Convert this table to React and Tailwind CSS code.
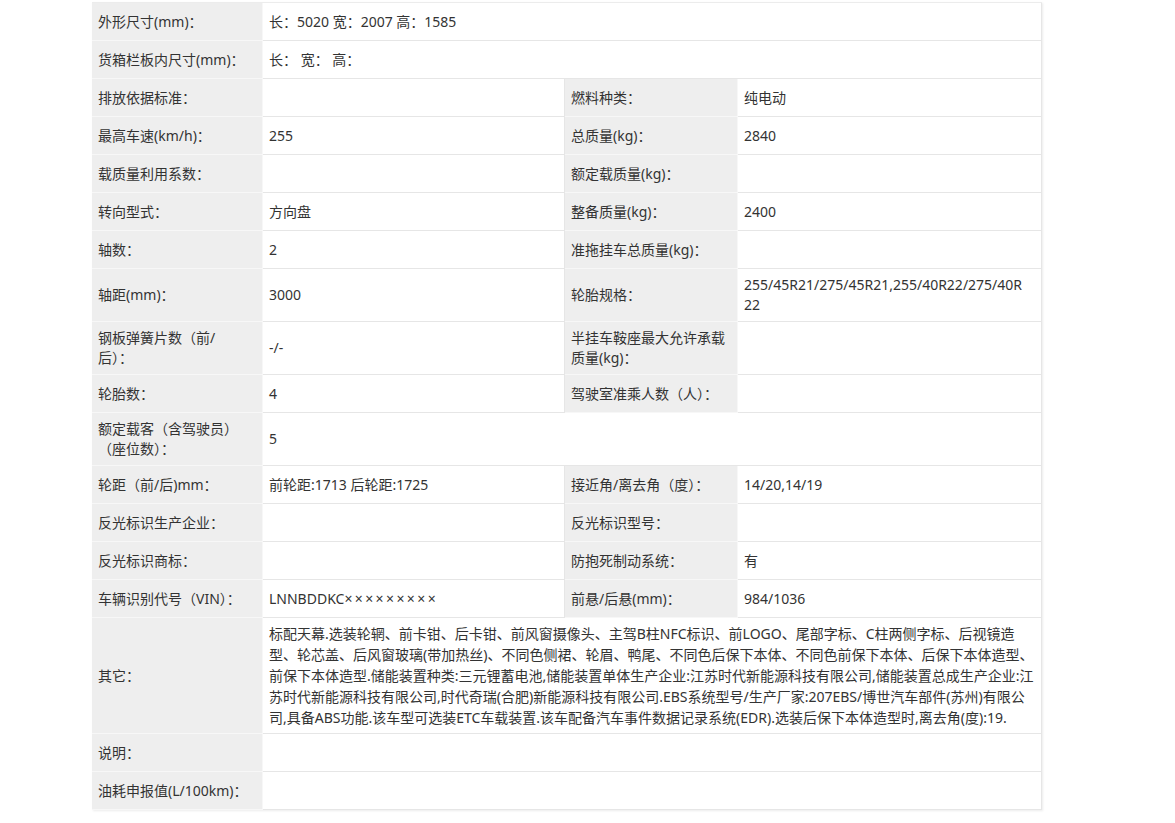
const label =
  "bg-[#eeeeee] px-[6px] py-[6px] border-b border-r border-[#f7f7f7] flex items-center min-h-[38px] leading-5";
const value =
  "bg-white px-[6px] py-[6px] border-b border-r border-[#e6e6e6] flex items-center min-h-[38px] leading-5";

const rows = [
  { l: "外形尺寸(mm)：", v: "长：5020 宽：2007 高：1585", wide: true },
  { l: "货箱栏板内尺寸(mm)：", v: "长： 宽： 高：", wide: true },
  { l: "排放依据标准：", v: "", l2: "燃料种类：", v2: "纯电动" },
  { l: "最高车速(km/h)：", v: "255", l2: "总质量(kg)：", v2: "2840" },
  { l: "载质量利用系数：", v: "", l2: "额定载质量(kg)：", v2: "" },
  { l: "转向型式：", v: "方向盘", l2: "整备质量(kg)：", v2: "2400" },
  { l: "轴数：", v: "2", l2: "准拖挂车总质量(kg)：", v2: "" },
  {
    l: "轴距(mm)：",
    v: "3000",
    l2: "轮胎规格：",
    v2: ["255/45R21/275/45R21,255/40R22/275/40R", "22"],
  },
  {
    l: ["钢板弹簧片数（前/", "后）："],
    v: "-/-",
    l2: ["半挂车鞍座最大允许承载", "质量(kg)："],
    v2: "",
  },
  { l: "轮胎数：", v: "4", l2: "驾驶室准乘人数（人）：", v2: "" },
  { l: ["额定载客（含驾驶员）", "（座位数）："], v: "5", wide: true },
  {
    l: "轮距（前/后)mm：",
    v: "前轮距:1713 后轮距:1725",
    l2: "接近角/离去角（度）：",
    v2: "14/20,14/19",
  },
  { l: "反光标识生产企业：", v: "", l2: "反光标识型号：", v2: "" },
  { l: "反光标识商标：", v: "", l2: "防抱死制动系统：", v2: "有" },
  {
    l: "车辆识别代号（VIN）：",
    v: "VIN",
    l2: "前悬/后悬(mm)：",
    v2: "984/1036",
  },
];

const other = [
  "标配天幕.选装轮辋、前卡钳、后卡钳、前风窗摄像头、主驾B柱NFC标识、前LOGO、尾部字标、C柱两侧字标、后视镜造",
  "型、轮芯盖、后风窗玻璃(带加热丝)、不同色侧裙、轮眉、鸭尾、不同色后保下本体、不同色前保下本体、后保下本体造型、",
  "前保下本体造型.储能装置种类:三元锂蓄电池,储能装置单体生产企业:江苏时代新能源科技有限公司,储能装置总成生产企业:江",
  "苏时代新能源科技有限公司,时代奇瑞(合肥)新能源科技有限公司.EBS系统型号/生产厂家:207EBS/博世汽车部件(苏州)有限公",
  "司,具备ABS功能.该车型可选装ETC车载装置.该车配备汽车事件数据记录系统(EDR).选装后保下本体造型时,离去角(度):19.",
];

function Text({ t }) {
  if (t === "VIN") {
    // masked VIN, the × marks sit wider apart in the original
    return (
      <span className="whitespace-pre">
        LNNBDDKC<span className="tracking-[2.4px]">×××××××××</span>
      </span>
    );
  }
  if (Array.isArray(t)) {
    return (
      <div>
        {t.map((line, i) => (
          <div key={i} className="whitespace-nowrap">
            {line}
          </div>
        ))}
      </div>
    );
  }
  return <span className="whitespace-pre">{t}</span>;
}

export default function App() {
  return (
    <div
      className="min-h-screen bg-white text-[14px] text-[#333333]"
      style={{ fontFamily: '"Noto Sans", "Noto Sans CJK SC", sans-serif' }}
    >
      <div className="ml-[92px] mt-[2px] w-[950px] border-t border-[#ececec] shadow-[1px_1px_2px_rgba(0,0,0,0.08)] grid grid-cols-[171px_302px_173px_304px]">
        {rows.map((r, i) =>
          r.wide ? (
            <div key={i} className="contents">
              <div className={label}>
                <Text t={r.l} />
              </div>
              <div className={value + " col-span-3"}>
                <Text t={r.v} />
              </div>
            </div>
          ) : (
            <div key={i} className="contents">
              <div className={label}>
                <Text t={r.l} />
              </div>
              <div className={value}>
                <Text t={r.v} />
              </div>
              <div className={label}>
                <Text t={r.l2} />
              </div>
              <div className={value}>
                <Text t={r.v2} />
              </div>
            </div>
          )
        )}

        {/* 其它 */}
        <div className={label}>其它：</div>
        <div className="col-span-3 bg-white px-[6px] py-[5px] border-b border-r border-[#e6e6e6] leading-[21px]">
          {other.map((line, i) => (
            <div key={i} className="whitespace-nowrap">
              {line}
            </div>
          ))}
        </div>

        <div className={label}>说明：</div>
        <div className={value + " col-span-3"}></div>

        <div className={label}>油耗申报值(L/100km)：</div>
        <div className={value + " col-span-3"}></div>
      </div>
    </div>
  );
}
